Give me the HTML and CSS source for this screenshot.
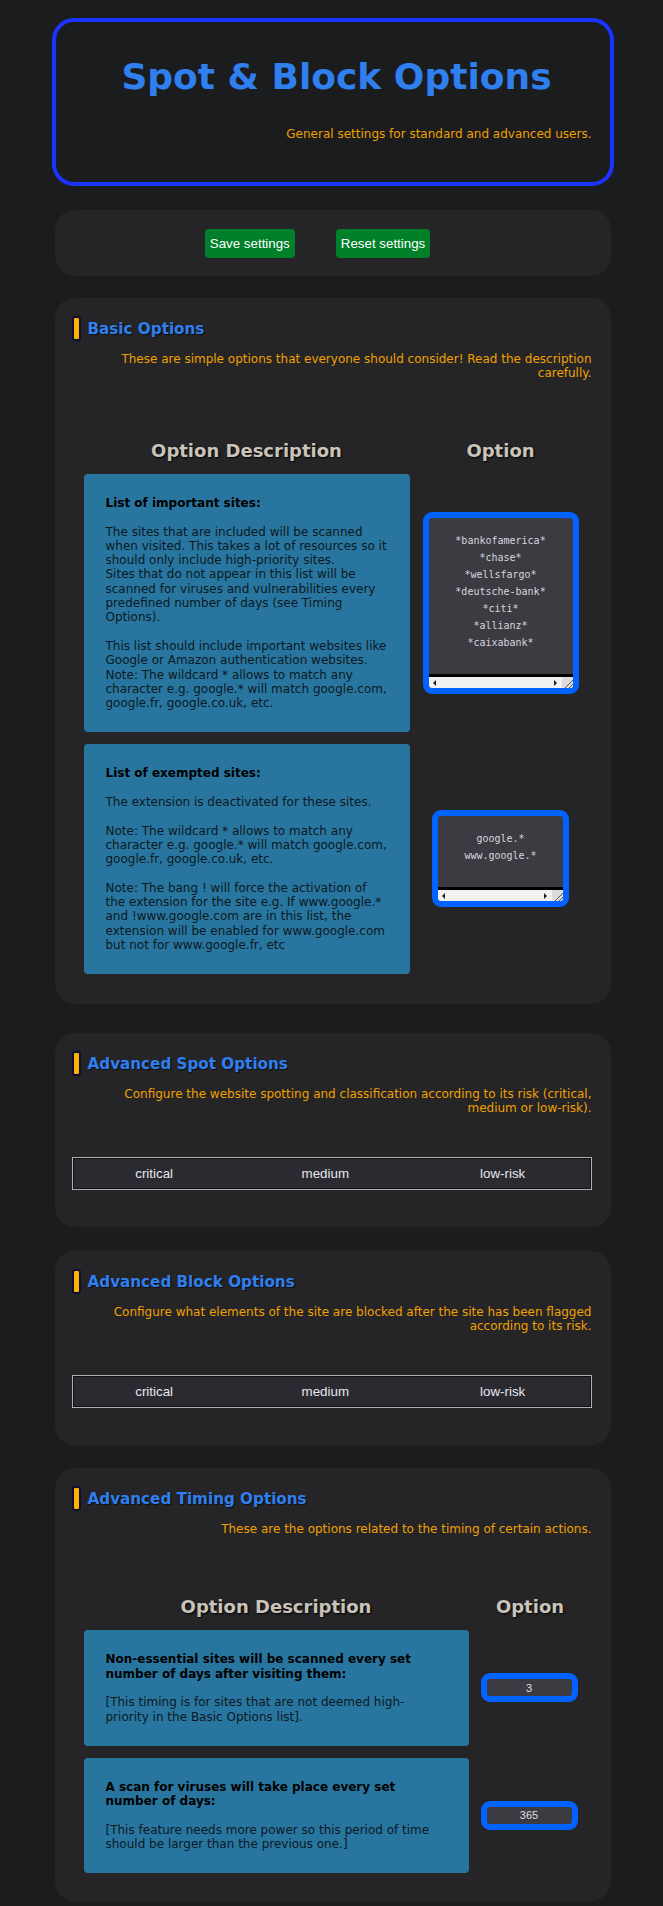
FILE: index.html
```html
<!DOCTYPE html>
<html lang="en">
<head>
<meta charset="utf-8">
<title>Spot &amp; Block Options</title>
<link rel="stylesheet" href="styles.css">
</head>
<body>
<main class="page">
  <header class="hero">
    <h1 class="hero-title">Spot &amp; Block Options</h1>
    <p class="hero-sub">General settings for standard and advanced users.</p>
  </header>

  <section class="card actions">
    <button class="btn" type="button">Save settings</button>
    <button class="btn" type="button">Reset settings</button>
  </section>

  <section class="card section section-basic">
    <h2 class="sec-title"><span class="sec-bar"></span>Basic Options</h2>
    <p class="sec-desc">These are simple options that everyone should consider! Read the description carefully.</p>
    <table class="opt-table">
      <colgroup><col class="col-desc-basic"><col></colgroup>
      <tr><th>Option Description</th><th>Option</th></tr>
      <tr>
        <td class="opt-desc"><b>List of important sites:</b><br><br>The sites that are included will be scanned when visited. This takes a lot of resources so it should only include high-priority sites.<br>Sites that do not appear in this list will be scanned for viruses and vulnerabilities every predefined number of days (see Timing Options).<br><br>This list should include important websites like Google or Amazon authentication websites.<br>Note: The wildcard * allows to match any character e.g. google.* will match google.com, google.fr, google.co.uk, etc.</td>
        <td class="opt-ctrl">
          <div class="ta ta-big">
            <div class="ta-text">*bankofamerica*<br>*chase*<br>*wellsfargo*<br>*deutsche-bank*<br>*citi*<br>*allianz*<br>*caixabank*</div>
            <div class="ta-sep"></div>
            <div class="ta-scroll"><span class="arr arr-l"></span><span class="arr arr-r"></span><span class="grip"></span></div>
          </div>
        </td>
      </tr>
      <tr>
        <td class="opt-desc"><b>List of exempted sites:</b><br><br>The extension is deactivated for these sites.<br><br>Note: The wildcard * allows to match any character e.g. google.* will match google.com, google.fr, google.co.uk, etc.<br><br>Note: The bang ! will force the activation of the extension for the site e.g. If www.google.* and !www.google.com are in this list, the extension will be enabled for www.google.com but not for www.google.fr, etc</td>
        <td class="opt-ctrl">
          <div class="ta ta-small">
            <div class="ta-text">google.*<br>www.google.*</div>
            <div class="ta-sep"></div>
            <div class="ta-scroll"><span class="arr arr-l"></span><span class="arr arr-r"></span><span class="grip"></span></div>
          </div>
        </td>
      </tr>
    </table>
  </section>

  <section class="card section section-risk section-spot">
    <h2 class="sec-title"><span class="sec-bar"></span>Advanced Spot Options</h2>
    <p class="sec-desc">Configure the website spotting and classification according to its risk (critical, medium or low-risk).</p>
    <table class="risk-table">
      <tr><td>critical</td><td>medium</td><td>low-risk</td></tr>
    </table>
  </section>

  <section class="card section section-risk section-block">
    <h2 class="sec-title"><span class="sec-bar"></span>Advanced Block Options</h2>
    <p class="sec-desc">Configure what elements of the site are blocked after the site has been flagged according to its risk.</p>
    <table class="risk-table">
      <tr><td>critical</td><td>medium</td><td>low-risk</td></tr>
    </table>
  </section>

  <section class="card section section-timing">
    <h2 class="sec-title"><span class="sec-bar"></span>Advanced Timing Options</h2>
    <p class="sec-desc">These are the options related to the timing of certain actions.</p>
    <table class="opt-table">
      <colgroup><col class="col-desc-timing"><col></colgroup>
      <tr><th>Option Description</th><th>Option</th></tr>
      <tr>
        <td class="opt-desc"><b>Non-essential sites will be scanned every set number of days after visiting them:</b><br><br>[This timing is for sites that are not deemed high-priority in the Basic Options list].</td>
        <td class="opt-ctrl"><input class="num" type="text" value="3" readonly></td>
      </tr>
      <tr>
        <td class="opt-desc"><b>A scan for viruses will take place every set number of days:</b><br><br>[This feature needs more power so this period of time should be larger than the previous one.]</td>
        <td class="opt-ctrl"><input class="num" type="text" value="365" readonly></td>
      </tr>
    </table>
  </section>
</main>
</body>
</html>
```
FILE: styles.css
```css
* { box-sizing: border-box; }

html, body { background: #1b1c1e; }

body {
  margin: 0;
  padding: 18px 0 3px 2px;
  font-family: "DejaVu Sans", Verdana, sans-serif;
}

.page {
  width: 556px;
  margin: 0 auto;
}

/* header */
.hero {
  margin: 0 -3px;
  height: 168px;
  border: 4px solid #1a33ff;
  border-radius: 22px;
  padding: 34px 18px 0;
}

.hero-title {
  margin: 0;
  padding-left: 8px;
  text-align: center;
  font-size: 36px;
  font-weight: bold;
  color: #2f7fef;
  line-height: 42px;
}

.hero-sub {
  margin: 29px 0 0;
  text-align: right;
  font-size: 12px;
  line-height: 14px;
  color: #f0a000;
}

/* cards */
.card {
  background: #252528;
  border-radius: 20px;
}

.actions {
  margin-top: 24px;
  height: 66px;
  display: flex;
  justify-content: center;
  align-items: center;
  gap: 41px;
  padding-right: 30px;
}

.btn {
  font-family: "Liberation Sans", Arial, sans-serif;
  font-size: 13.33px;
  line-height: 15px;
  color: #fff;
  background: #008029;
  border: none;
  border-radius: 4px;
  padding: 7px 5px;
}

.section {
  margin-top: 22px;
  padding: 18px 19px 16px 17px;
}

.section-basic { padding-bottom: 18px; }
.section-spot { margin-top: 29px; }
.section-block { margin-top: 24px; }
.section-timing { margin-top: 23px; }
.section-risk { padding-bottom: 37px; }

.sec-title {
  margin: 0;
  height: 25px;
  display: flex;
  align-items: center;
  gap: 7px;
  font-size: 15.2px;
  font-weight: bold;
  color: #2f7fef;
  text-shadow: 1px 1px 1px rgba(0, 0, 0, 0.6);
}

.sec-bar {
  width: 9px;
  height: 25px;
  background: #ffb000;
  border: 2px solid #0e1030;
  border-radius: 3px;
}

.sec-desc {
  margin: 11px 0 0;
  text-align: right;
  font-size: 12px;
  line-height: 14px;
  color: #f0a000;
}

/* option tables */
.opt-table {
  width: 100%;
  margin-top: 48px;
  border-spacing: 12px;
  table-layout: fixed;
}

.col-desc-basic { width: 326px; }
.col-desc-timing { width: 385px; }

.opt-table th {
  padding: 0;
  font-size: 18px;
  line-height: 22px;
  font-weight: bold;
  color: #c9c3ba;
  text-shadow: 1px 1px 2px #000;
}

.opt-desc {
  background: #28769f;
  border-radius: 4px;
  padding: 22px 22px;
  font-size: 12px;
  line-height: 14.3px;
  color: #0c1822;
  vertical-align: top;
}

.opt-desc b { color: #000; }

.opt-ctrl {
  padding: 0 0 1px;
  vertical-align: middle;
  text-align: center;
}

/* fake textarea */
.ta {
  margin: 0 auto;
  border: 6px solid #0062ff;
  border-radius: 9px;
  background: #3c3b42;
  overflow: hidden;
  display: flex;
  flex-direction: column;
}

.ta-big { width: 156px; }
.ta-small { width: 137px; }

.ta-text {
  font-family: "DejaVu Sans Mono", monospace;
  font-size: 10px;
  line-height: 17px;
  color: #d6d6de;
  text-align: center;
  white-space: nowrap;
  padding-top: 14px;
}

.ta-big .ta-text { height: 156px; }
.ta-small .ta-text { height: 71px; }

.ta-sep {
  height: 3px;
  background: #000;
}

.ta-scroll {
  position: relative;
  height: 11px;
  background: #f1f1f1;
}

.arr {
  position: absolute;
  top: 3px;
  width: 0;
  height: 0;
  border-top: 3px solid transparent;
  border-bottom: 3px solid transparent;
}

.arr-l { left: 4px; border-right: 3px solid #222; }
.arr-r { right: 16px; border-left: 3px solid #222; }

.grip {
  position: absolute;
  right: 0;
  top: 0;
  width: 11px;
  height: 11px;
  background:
    linear-gradient(135deg, transparent 62%, #555 62%, #555 68%, transparent 68%, transparent 80%, #555 80%, #555 86%, transparent 86%),
    #dcdcdc;
}

/* number inputs */
.num {
  display: block;
  width: 97px;
  height: 29px;
  border: 6px solid #0062ff;
  border-radius: 9px;
  background: #3c3b42;
  color: #dedee4;
  font-family: "Liberation Sans", Arial, sans-serif;
  font-size: 11px;
  text-align: center;
  padding: 0;
  outline: none;
}

/* risk tables */
.risk-table {
  width: 100%;
  margin-top: 42px;
  height: 33px;
  border-collapse: collapse;
  background: #2b2a30;
  border: 1px solid #b0b0b0;
  box-shadow: inset 0 0 0 1px #111;
}

.risk-table td {
  padding: 0 30px;
  text-align: center;
  vertical-align: middle;
  font-family: "Liberation Sans", Arial, sans-serif;
  font-size: 13.33px;
  color: #e6e8ee;
}
```
